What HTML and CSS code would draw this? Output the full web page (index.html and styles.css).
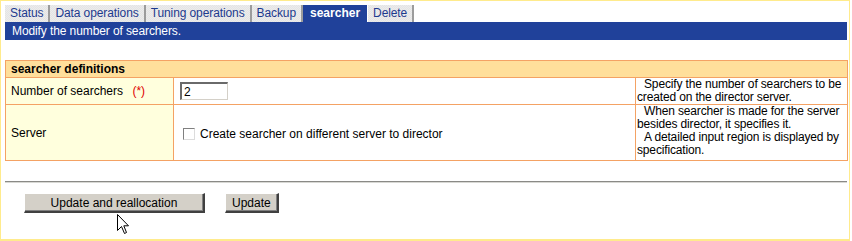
FILE: index.html
```html
<!DOCTYPE html>
<html>
<head>
<meta charset="utf-8">
<link rel="stylesheet" href="styles.css">
</head>
<body>
<div class="frame">
  <div class="tabs">
    <span class="tab">Status</span>
    <span class="tab">Data operations</span>
    <span class="tab">Tuning operations</span>
    <span class="tab">Backup</span>
    <span class="tab active">searcher</span>
    <span class="tab">Delete</span>
  </div>
  <div class="bar">Modify the number of searchers.</div>

  <table class="defs">
    <colgroup>
      <col class="c-label">
      <col class="c-value">
      <col class="c-desc">
    </colgroup>
    <tr class="head"><th colspan="3">searcher definitions</th></tr>
    <tr class="r1">
      <td class="label">Number of searchers <span class="req">(*)</span></td>
      <td class="value"><input class="num" type="text" value="2"></td>
      <td class="desc"><p>Specify the number of searchers to be created on the director server.</p></td>
    </tr>
    <tr class="r2">
      <td class="label">Server</td>
      <td class="value"><label class="chk"><span class="box"></span>Create searcher on different server to director</label></td>
      <td class="desc"><p>When searcher is made for the server besides director, it specifies it.</p><p>A detailed input region is displayed by specification.</p></td>
    </tr>
  </table>

  <hr class="sep">

  <div class="actions">
    <button class="btn wide">Update and reallocation</button>
    <button class="btn">Update</button>
  </div>

  <svg class="cursor" width="13" height="21" viewBox="0 0 13 21">
    <path d="M0.5 0.5 L0.5 16.5 L4.5 12.5 L7.5 19.5 L9.5 18.5 L6.8 11.8 L11.5 11.8 Z" fill="#fff" stroke="#000" stroke-width="1" stroke-linejoin="miter"/>
  </svg>
</div>
</body>
</html>
```

FILE: styles.css
```css
* { box-sizing: border-box; }
html, body { margin: 0; padding: 0; background: #fff; }
body {
  font-family: "Liberation Sans", Arial, sans-serif;
  font-size: 12px;
  color: #000;
}
.frame {
  position: relative;
  width: 850px;
  height: 241px;
  border: 1px solid #ffeb8c;
  border-bottom-width: 2px;
  padding: 4px 2px 0 4px;
}
.tabs {
  display: flex;
  height: 17px;
}
.tab {
  display: block;
  height: 17px;
  line-height: 17px;
  padding: 0 5px 0 5px;
  letter-spacing: -0.1px;
  background-color: #e4e4e4;
  background-image:
    linear-gradient(45deg, #ececec 25%, transparent 25%, transparent 75%, #ececec 75%),
    linear-gradient(45deg, #ececec 25%, transparent 25%, transparent 75%, #ececec 75%);
  background-size: 2px 2px;
  background-position: 0 0, 1px 1px;
  color: #1d3a8e;
  border-right: 2px solid #9c9c9c;
  white-space: nowrap;
}
.tab.active {
  background: #20419a;
  color: #fff;
  font-weight: bold;
  letter-spacing: 0;
  padding: 0 7px;
  border-right: 0;
  margin-right: 1px;
}
.bar {
  height: 18px;
  line-height: 18px;
  background: #20419a;
  color: #fff;
  padding-left: 7px;
  letter-spacing: -0.1px;
}
.defs {
  margin-top: 20px;
  width: 842px;
  border-collapse: collapse;
  table-layout: fixed;
}
.c-label { width: 168px; }
.c-value { width: 462px; }
.c-desc { width: 212px; }
.defs th, .defs td {
  border: 1px solid #f4a264;
  padding: 0;
}
.defs .head th {
  background: #ffdf9b;
  text-align: left;
  font-weight: bold;
  height: 17px;
  line-height: 15px;
  padding-left: 5px;
}
.r1 td { height: 27px; }
.r2 td { height: 56px; }
.label {
  background: #ffffdd;
  padding-left: 5px !important;
  vertical-align: middle;
}
.req {
  color: #e00000;
  margin-left: 6px;
}
.value {
  padding-left: 6px !important;
  vertical-align: middle;
}
.num {
  display: block;
  width: 48px;
  height: 18px;
  margin: 0;
  padding: 0 2px;
  font: 12px "Liberation Sans", Arial, sans-serif;
  color: #000;
  border-style: solid;
  border-width: 2px 1px 1px 2px;
  border-color: #6a6a6a #d4d0c8 #d4d0c8 #6a6a6a;
  background: #fff;
}
.chk {
  display: flex;
  align-items: center;
  margin-left: 3px;
  padding-top: 2px;
}
.box {
  display: inline-block;
  width: 12px;
  height: 12px;
  border-style: solid;
  border-width: 1px;
  border-color: #808080 #dcdcdc #dcdcdc #808080;
  background: #fff;
  margin-right: 5px;
}
.desc {
  vertical-align: top;
  line-height: 13px;
  letter-spacing: -0.15px;
  padding: 0 0 0 1px !important;
}
.desc p {
  margin: 0;
  text-indent: 7px;
}
.sep {
  margin: 20px 0 0 0;
  width: 842px;
  height: 2px;
  border: 0;
  border-top: 1px solid #8a8a86;
  border-bottom: 1px solid #d8d8d4;
}
.actions {
  display: flex;
  gap: 20px;
  margin-top: 10px;
  padding-left: 19px;
}
.btn {
  height: 20px;
  margin: 0;
  padding: 0 6px;
  font: 12px "Liberation Sans", Arial, sans-serif;
  color: #000;
  background: #d4d0c8;
  border-style: solid;
  border-width: 1px 2px 2px 1px;
  border-color: #fff #404040 #404040 #fff;
  box-shadow: inset -1px -1px 0 #808080;
}
.btn.wide { width: 181px; }
.cursor {
  position: absolute;
  left: 116px;
  top: 213px;
}
```
